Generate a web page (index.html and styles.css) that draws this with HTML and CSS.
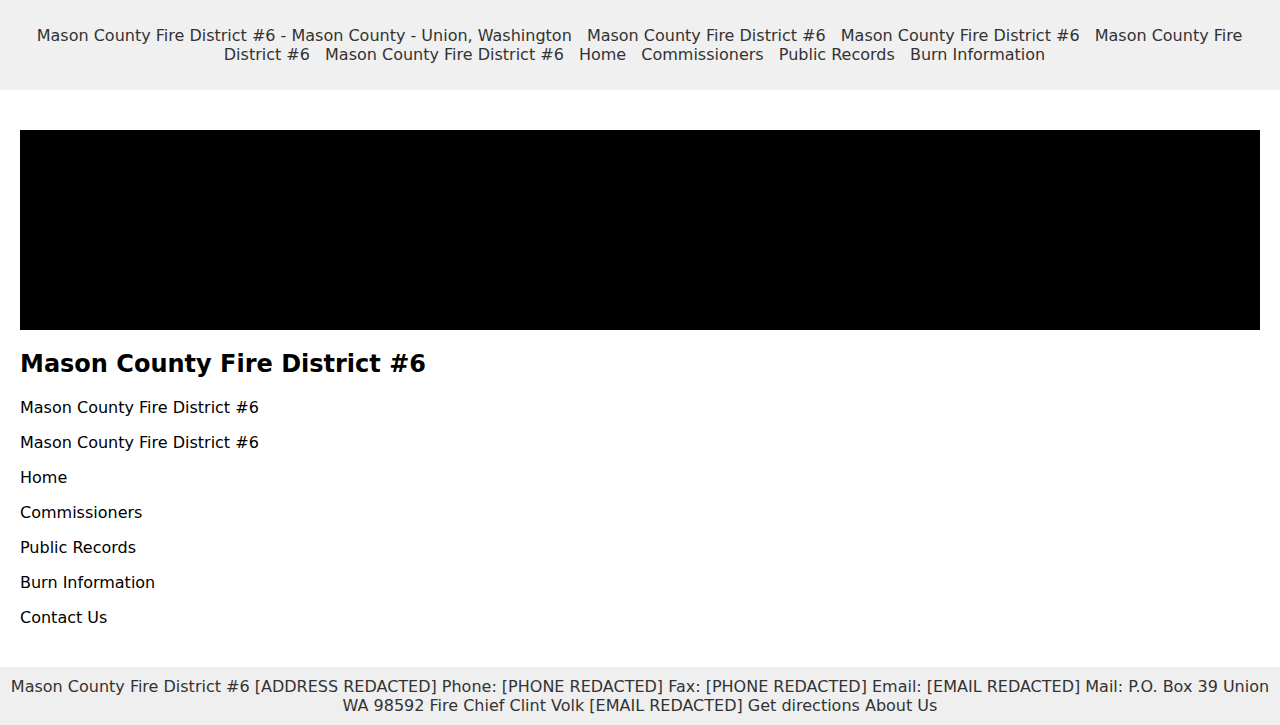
FILE: index.html
```html
<!DOCTYPE html>
<html lang="en">
<head>
<meta charset="utf-8">
<title>Mason County Fire District #6</title>
<link rel="stylesheet" href="styles.css">
</head>
<body>
<header class="site-header">
  <nav class="top-nav">
    <a href="#">Mason County Fire District #6 - Mason County - Union, Washington</a>
    <a href="#">Mason County Fire District #6</a>
    <a href="#">Mason County Fire District #6</a>
    <a href="#">Mason County Fire District #6</a>
    <a href="#">Mason County Fire District #6</a>
    <a href="#">Home</a>
    <a href="#">Commissioners</a>
    <a href="#">Public Records</a>
    <a href="#">Burn Information</a>
  </nav>
</header>
<main class="content">
  <div class="banner"></div>
  <h1 class="title">Mason County Fire District #6</h1>
  <ul class="link-list">
    <li><a href="#">Mason County Fire District #6</a></li>
    <li><a href="#">Mason County Fire District #6</a></li>
    <li><a href="#">Home</a></li>
    <li><a href="#">Commissioners</a></li>
    <li><a href="#">Public Records</a></li>
    <li><a href="#">Burn Information</a></li>
    <li><a href="#">Contact Us</a></li>
  </ul>
</main>
<footer class="site-footer">
  Mason County Fire District #6 [ADDRESS REDACTED] Phone: [PHONE REDACTED] Fax: [PHONE REDACTED] Email: [EMAIL REDACTED] Mail: P.O. Box 39 Union WA 98592 Fire Chief Clint Volk [EMAIL REDACTED] <a href="#">Get directions</a> <a href="#">About Us</a>
</footer>
</body>
</html>
```
FILE: styles.css
```css
* {
  box-sizing: border-box;
}

html, body {
  margin: 0;
  padding: 0;
}

body {
  font-family: "DejaVu Sans", Verdana, sans-serif;
  font-size: 16px;
  line-height: 19px;
  color: #000;
  background: #fff;
}

a {
  color: inherit;
  text-decoration: none;
}

.site-header {
  background: #f0f0f0;
  padding: 26px 23px 26px 17px;
}

.top-nav {
  text-align: center;
  color: #333;
}

.top-nav a {
  margin: 0 5px;
}

.content {
  padding: 40px 20px;
}

.banner {
  height: 200px;
  background: #000;
}

.title {
  margin: 20px 0;
  font-size: 24px;
  line-height: 28px;
  font-weight: bold;
}

.link-list {
  list-style: none;
  margin: 0;
  padding: 0;
  display: flex;
  flex-direction: column;
  gap: 16px;
}

.link-list a {
  color: #000;
}

.site-footer {
  background: #efefef;
  color: #333;
  text-align: center;
  padding: 10px;
}
```
